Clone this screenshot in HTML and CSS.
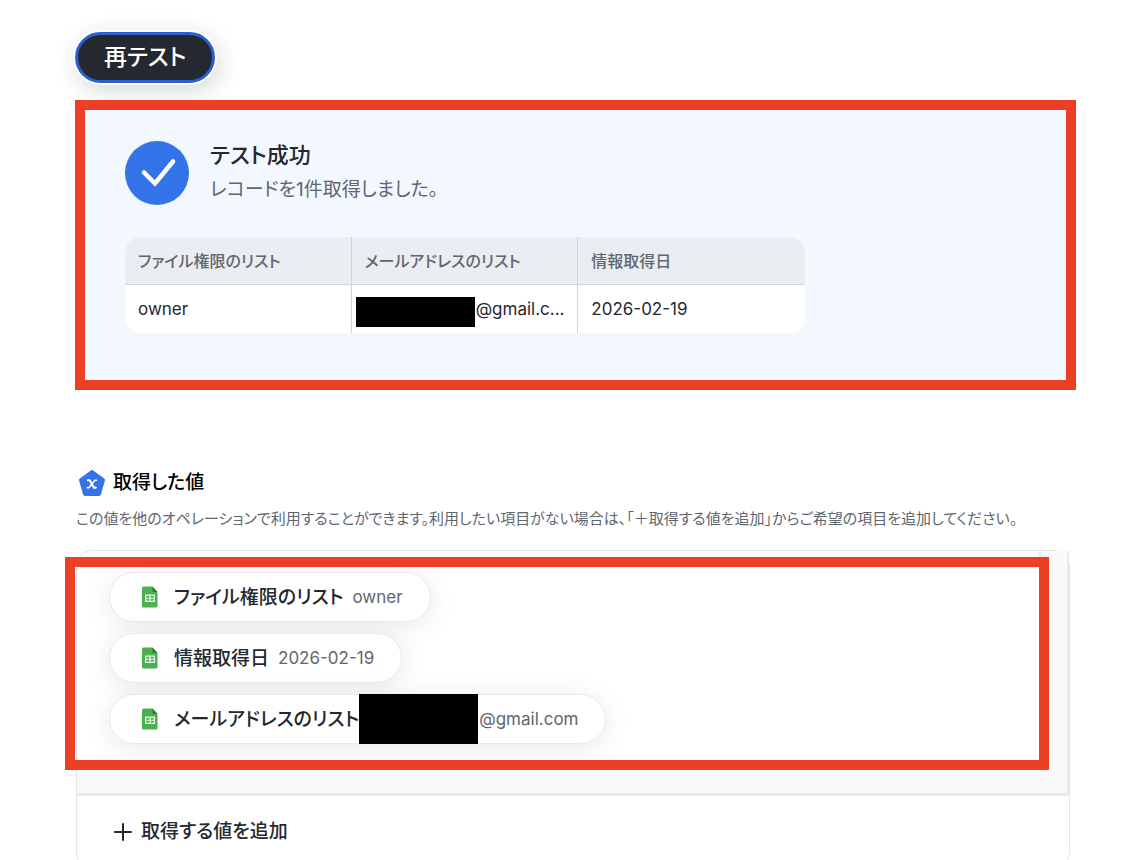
FILE: index.html
```html
<!DOCTYPE html>
<html lang="ja">
<head>
<meta charset="utf-8">
<meta name="viewport" content="width=device-width, initial-scale=1">
<title>テスト結果</title>
<link rel="stylesheet" href="styles.css">
</head>
<body>
<svg class="defs" width="0" height="0" aria-hidden="true">
  <symbol id="sheet" viewBox="0 0 16 22">
    <path fill="#4caf50" d="M1.500 0.500H10.500L15.500 6V20q0 1.500-1.500 1.500h-12.500Q0 21.500 0 20v-18Q0 0.500 1.500 0.500z"/>
    <path fill="#2e7d32" d="M10.500 0.500l5 5.500h-4q-1 0-1-1z"/>
    <path fill="#e8f5e9" fill-rule="evenodd" d="M3 8.500h10v7.500H3zM4.300 9.800v1.900h3V9.800zm4.400 0v1.900h3V9.800zm-4.400 3v1.900h3v-1.900zm4.400 0v1.900h3v-1.900z"/>
  </symbol>
</svg>
<main class="page">
  <button class="retest" type="button">再テスト</button>

  <section class="result">
    <div class="summary">
      <svg class="check" viewBox="0 0 64 64" aria-hidden="true">
        <circle cx="32" cy="32" r="32" fill="#3375e8"/>
        <path d="M19 31.500L30 42.500L48 20.500" fill="none" stroke="#fff" stroke-width="4.500" stroke-linecap="round"/>
      </svg>
      <div>
        <h1 class="summary-title">テスト成功</h1>
        <p class="summary-text">レコードを1件取得しました。</p>
      </div>
    </div>
    <table class="records">
      <thead>
        <tr><th scope="col">ファイル権限のリスト</th><th scope="col">メールアドレスのリスト</th><th scope="col">情報取得日</th></tr>
      </thead>
      <tbody>
        <tr>
          <td>owner</td>
          <td class="masked"><div class="mail"><span class="mask"></span><span>@gmail.c...</span></div></td>
          <td>2026-02-19</td>
        </tr>
      </tbody>
    </table>
  </section>

  <section class="values">
    <h2 class="values-title">
      <svg class="badge" viewBox="0 0 26 26" aria-hidden="true">
        <path d="M13 2L24 10L20 24H6L2 10Z" fill="#3375e8" stroke="#3375e8" stroke-width="4" stroke-linejoin="round"/>
        <path d="M8.800 10.300H10.800L14.700 17.600H16.800" fill="none" stroke="#fff" stroke-width="2.100" stroke-linecap="round" stroke-linejoin="round"/>
        <path d="M17.600 10.200H16L9.800 17.700H8.200" fill="none" stroke="#fff" stroke-width="1.500" stroke-linecap="round" stroke-linejoin="round"/>
      </svg>
      <span>取得した値</span>
    </h2>
    <p class="values-text">この値を他のオペレーションで利用することができます。利用したい項目がない場合は、「＋取得する値を追加」からご希望の項目を追加してください。</p>

    <div class="card">
      <div class="scroller">
        <ul class="pills">
          <li class="pill"><svg class="sheet"><use href="#sheet"/></svg><span class="name">ファイル権限のリスト</span><span class="value">owner</span></li>
          <li class="pill"><svg class="sheet"><use href="#sheet"/></svg><span class="name">情報取得日</span><span class="value">2026-02-19</span></li>
          <li class="pill pill-masked"><svg class="sheet"><use href="#sheet"/></svg><span class="name">メールアドレスのリスト</span><span class="mask"></span><span class="value">@gmail.com</span></li>
        </ul>
        <div class="highlight"></div>
      </div>
      <button class="add" type="button">
        <svg class="plus" viewBox="0 0 18 18" aria-hidden="true"><path d="M9 1v16M1 9h16" stroke="#25282f" stroke-width="2" stroke-linecap="round"/></svg>
        取得する値を追加
      </button>
    </div>
  </section>
</main>
</body>
</html>
```
FILE: styles.css
```css
* { box-sizing: border-box; }

body {
  margin: 0;
  background: #fff;
  color: #25282f;
  font-family: Inter, "Noto Sans CJK JP", sans-serif;
  font-feature-settings: "palt";
}

h1, h2, p, ul { margin: 0; padding: 0; }
ul { list-style: none; }
button { font: inherit; font-feature-settings: inherit; color: inherit; }
.defs { position: absolute; }

.page { padding: 32px 55px 0 75px; }

.retest {
  display: block;
  height: 51px;
  padding: 0 26px 6px;
  border: 3px solid #2962cf;
  border-radius: 26px;
  background: #25282f;
  color: #fff;
  font-size: 23px;
  font-weight: 500;
  box-shadow: 0 0 0 2px #fff, 3px 6px 24px rgba(40, 50, 60, 0.22);
}

.result {
  margin-top: 17px;
  padding: 31px 40px 47px;
  border: 10px solid #eb4025;
  background: #f3f8ff;
}

.summary { display: flex; gap: 21px; }
.check { width: 64px; height: 64px; flex: none; }
.summary-title { font-size: 22px; line-height: 28px; font-weight: 500; }
.summary-text { margin-top: 7px; font-size: 19px; line-height: 28px; color: #606670; }

.records {
  width: 680px;
  max-width: 100%;
  margin-top: 32px;
  table-layout: fixed;
  border-spacing: 0;
  border-radius: 16px;
  overflow: hidden;
  background: #fff;
}
.records th, .records td {
  height: 48px;
  padding: 0 13px;
  text-align: left;
  border-right: 1px solid #d0d5dc;
}
.records th:last-child, .records td:last-child { border-right: 0; }
.records th {
  padding-bottom: 2px;
  background: #eaedf2;
  border-bottom: 1px solid #d0d5dc;
  color: #606670;
  font-size: 16px;
  font-weight: 500;
}
.records td { font-size: 17px; }
.records .masked { padding: 0 4px; }
.mail { display: flex; align-items: center; gap: 1px; height: 30px; }
.mail .mask { align-self: flex-end; margin-bottom: -3px; }
.mask { flex: none; width: 119px; height: 30px; background: #000; }

.values { margin-top: 78px; padding-right: 6px; }
.values-title {
  display: flex;
  align-items: center;
  gap: 8px;
  padding-left: 4px;
  color: #000;
  font-size: 19px;
  line-height: 30px;
  font-weight: 500;
}
.badge { width: 26px; height: 26px; }
.values-text { margin: 9px 0 0 1px; font-size: 15px; line-height: 24px; color: #606670; white-space: nowrap; }

.card {
  margin: 19px 0 0 1px;
  border: 1px solid #e4e5e7;
  border-radius: 16px;
}
.scroller {
  position: relative;
  padding-right: 26px;
  padding-bottom: 30px;
  border-right: 2px solid #ebebeb;
  border-bottom: 3px solid #ebebeb;
  border-radius: 16px 0 0 0;
  background: #fafafa;
}
.pills {
  display: flex;
  flex-direction: column;
  align-items: flex-start;
  gap: 11px;
  padding: 21px 32px 19px;
  border-right: 2px solid #e8e8e8;
  border-radius: 16px 0 0 0;
  background: #fff;
}
.pill {
  display: flex;
  align-items: center;
  height: 50px;
  padding: 0 27px 0 32px;
  border: 1px solid #e8eaef;
  border-radius: 25px;
  background: #fff;
  box-shadow: 0 4px 28px rgba(0, 0, 0, 0.09);
}
.sheet { width: 16px; height: 22px; margin-right: 16px; }
.name { padding-bottom: 4px; font-size: 19px; font-weight: 500; }
.value { margin-left: 9px; font-size: 17px; color: #606670; }
.pill-masked .mask { height: 50px; }
.pill-masked .value { margin-left: 1px; }
.highlight {
  position: absolute;
  top: 6px;
  right: 18px;
  bottom: 23px;
  left: -12px;
  border: 10px solid #eb4025;
}

.add {
  display: flex;
  align-items: center;
  gap: 9px;
  width: 100%;
  padding: 21px 37px;
  border: 0;
  background: none;
  font-size: 19px;
  line-height: 30px;
  font-weight: 500;
}
.plus { width: 18px; height: 18px; }
```
